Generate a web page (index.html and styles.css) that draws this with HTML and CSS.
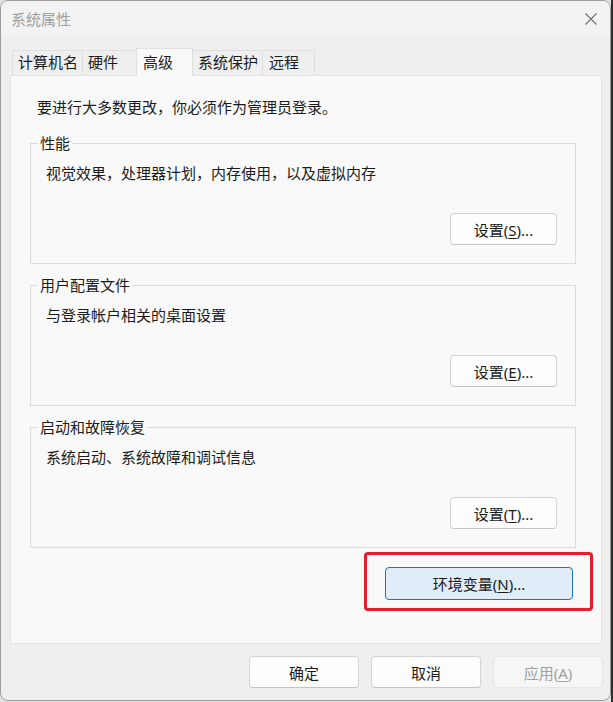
FILE: index.html
```html
<!DOCTYPE html>
<html lang="zh-CN">
<head>
  <meta charset="UTF-8" />
  <title>系统属性</title>
  <link rel="stylesheet" href="styles.css">
</head>
<body>

  <div class="window">
    <!-- TITLE BAR -->
    <div class="titlebar">
      <span class="title">系统属性</span>
      <button class="close-btn" aria-label="关闭">
        <svg width="12" height="12" viewBox="0 0 12 12">
          <path d="M0.5 0.5 L11.5 11.5 M11.5 0.5 L0.5 11.5" stroke="#6f6f6f" stroke-width="1.1" fill="none"/>
        </svg>
      </button>
    </div>

    <!-- TABS -->
    <div class="tabs">
      <div class="tab">计算机名</div>
      <div class="tab">硬件</div>
      <div class="tab active">高级</div>
      <div class="tab">系统保护</div>
      <div class="tab">远程</div>
    </div>

    <!-- ADVANCED PAGE -->
    <div class="panel">
      <p class="intro">要进行大多数更改，你必须作为管理员登录。</p>

      <fieldset class="group">
        <legend>性能</legend>
        <p class="desc">视觉效果，处理器计划，内存使用，以及虚拟内存</p>
        <div class="group-actions">
          <button class="btn">设置(<u>S</u>)...</button>
        </div>
      </fieldset>

      <fieldset class="group">
        <legend>用户配置文件</legend>
        <p class="desc">与登录帐户相关的桌面设置</p>
        <div class="group-actions">
          <button class="btn">设置(<u>E</u>)...</button>
        </div>
      </fieldset>

      <fieldset class="group">
        <legend>启动和故障恢复</legend>
        <p class="desc">系统启动、系统故障和调试信息</p>
        <div class="group-actions">
          <button class="btn">设置(<u>T</u>)...</button>
        </div>
      </fieldset>

      <div class="highlight">
        <button class="btn btn-accent">环境变量(<u>N</u>)...</button>
      </div>
    </div>

    <!-- DIALOG BUTTONS -->
    <div class="dialog-buttons">
      <button class="btn btn-dialog">确定</button>
      <button class="btn btn-dialog">取消</button>
      <button class="btn btn-dialog" disabled>应用(<u>A</u>)</button>
    </div>
  </div>

</body>
</html>
```

FILE: styles.css
```css
* {
  margin: 0; padding: 0;
  box-sizing: border-box;
}

body {
  width: 613px;
  height: 702px;
  overflow: hidden;
  background: linear-gradient(to right, #e2e2e2 611px, #2e2e2e 611px);
  font-family: "Noto Sans", "Noto Sans CJK SC", sans-serif;
  font-size: 15px;
  color: #1b1b1b;
}

.window {
  width: 611px;
  height: 701px;
  background: #efefef;
  border: 1px solid #9d9d9d;
  border-radius: 8px;
  display: flex;
  flex-direction: column;
  overflow: hidden;
}

.titlebar {
  height: 36px;
  flex-shrink: 0;
  display: flex;
  align-items: center;
  justify-content: space-between;
  padding: 0 13px 0 10px;
  background: #f3f3f3;
}

.title {
  color: #a0a0a0;
  line-height: 20px;
}

.close-btn {
  width: 12px;
  height: 12px;
  border: none;
  background: transparent;
  display: flex;
}

.tabs {
  height: 27px;
  margin-top: 11px;
  padding-left: 11px;
  display: flex;
  align-items: flex-end;
  position: relative;
  z-index: 1;
}

.tab {
  height: 25px;
  min-width: 55px;
  padding: 0 4px 0 5px;
  line-height: 23px;
  border: 1px solid #dfdfdf;
  border-bottom: none;
  margin-left: -1px;
  white-space: nowrap;
}

.tab:first-child {
  margin-left: 0;
}

.tab:last-child {
  min-width: 53px;
  padding-left: 6px;
}

.tab.active {
  height: 28px;
  min-width: 57px;
  padding-left: 6px;
  line-height: 26px;
  margin-bottom: -1px;
  background: #f9f9f9;
  border-color: #e0e0e0;
}

.panel {
  width: 592px;
  height: 569px;
  margin-left: 9px;
  flex-shrink: 0;
  background: #f9f9f9;
  border: 1px solid #e3e3e3;
  padding: 21px 8px 0 19px;
  display: flex;
  flex-direction: column;
}

.intro {
  line-height: 20px;
  margin-left: 7px;
}

.group {
  width: 546px;
  margin-top: 11px;
  border: 1px solid #dcdcdc;
  padding: 10px 18px 18px 0;
}

.intro + .group {
  margin-top: 16px;
}

.group legend {
  margin-left: 7px;
  padding: 0 2px;
  line-height: 20px;
}

.desc {
  line-height: 20px;
  margin-left: 15px;
}

.group-actions {
  display: flex;
  justify-content: flex-end;
  margin-top: 30px;
}

.btn {
  width: 107px;
  height: 32px;
  font-family: inherit;
  font-size: 15px;
  color: #1b1b1b;
  background: #fdfdfd;
  border: 1px solid #d4d4d4;
  border-bottom-color: #c4c4c4;
  border-radius: 4px;
  cursor: pointer;
}

.btn u {
  text-underline-offset: 2px;
}

.highlight {
  margin-top: 4px;
  align-self: flex-end;
  border: 3px solid #e81c2b;
  border-radius: 4px;
  padding: 12px 17px 8px 18px;
}

.btn-accent {
  width: 188px;
  height: 33px;
  background: #e0edf8;
  border: 1px solid #2071c6;
}

.dialog-buttons {
  margin-top: 12px;
  padding-right: 7px;
  display: flex;
  justify-content: flex-end;
  gap: 12px;
}

.btn-dialog {
  width: 110px;
}

.btn-dialog:disabled {
  color: #a0a0a0;
  background: #f6f6f6;
  border-color: #e6e6e6;
  cursor: default;
}
```
